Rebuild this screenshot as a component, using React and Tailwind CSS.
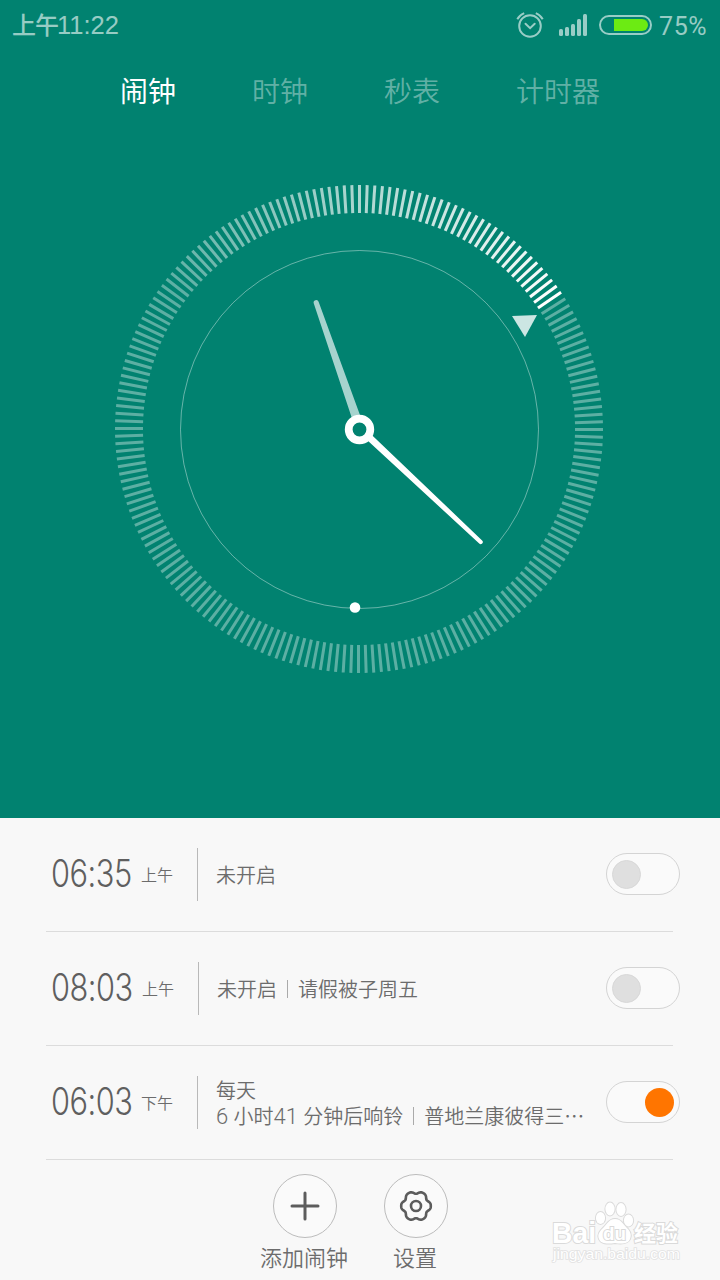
import { useState } from "react";
import clsx from "clsx";

const tabs = ["闹钟", "时钟", "秒表", "计时器"];

const initialAlarms = [
  { id: 1, time: "06:35", period: "上午", status: "未开启", on: false },
  { id: 2, time: "08:03", period: "上午", status: "未开启", label: "请假被子周五", on: false },
  {
    id: 3,
    time: "06:03",
    period: "下午",
    repeat: "每天",
    status: "6 小时41 分钟后响铃",
    label: "普地兰康彼得三⋯",
    on: true,
  },
];

const TICKS = 200;
const ACTIVE = 31;

// ticks fade out counter-clockwise from the active one
const tickOpacity = (i) => {
  const behind = (ACTIVE - i + TICKS) % TICKS;
  return Math.max(0.36, 1 - behind * 0.0105);
};

// outline of the six-lobed settings gear
const gearPoints = Array.from({ length: 120 }, (_, i) => {
  const a = (i * Math.PI) / 60;
  const r = 14.8 - 2.6 * ((1 - Math.cos(6 * a)) / 2) ** 1.7;
  return `${(17 + r * Math.cos(a)).toFixed(2)},${(17 + r * Math.sin(a)).toFixed(2)}`;
}).join(" ");

const StatusBar = () => (
  <div className="flex h-[50px] items-center justify-between pl-3 pr-3 text-white/60">
    <span className="flex items-center leading-[48px]">
      <span className="pb-[2px] text-[24px] font-medium tracking-[-1px]">上午</span>
      <span className="-ml-px font-['Liberation_Sans'] text-[25.5px]">11:22</span>
    </span>
    <div className="flex items-center">
      <svg width="28" height="28" viewBox="0 0 28 28" fill="none" stroke="currentColor" strokeWidth="2">
        <circle cx="14" cy="15" r="10.8" />
        <path d="M9.5 12.8l4.6 4.4 4.6-4.4" strokeLinecap="round" />
        <path d="M1.3 8.2Q3.4 4.2 8.2 2.2M26.7 8.2Q24.6 4.2 19.8 2.2" />
      </svg>
      <svg className="ml-[14px]" width="30" height="24" viewBox="0 0 30 24" fill="currentColor">
        <rect x="1" y="16" width="4" height="7" rx="1.5" />
        <rect x="7" y="14" width="4" height="9" rx="1.5" />
        <rect x="13" y="11" width="4" height="12" rx="1.5" />
        <rect x="19" y="6" width="4" height="17" rx="1.5" />
        <rect x="25" y="1" width="4" height="22" rx="1.5" />
      </svg>
      <div className="ml-[11px] flex h-[20px] w-[53px] justify-end rounded-full border-2 border-white/60 p-[2px]">
        <div className="h-[12px] w-[34px] rounded-r-full bg-[#6ceb13]" />
      </div>
      <span className="ml-[7px] w-[49px] pt-[3px] whitespace-nowrap font-['Roboto'] text-[25px] tracking-[0.6px]">
        75%
      </span>
    </div>
  </div>
);

const Dial = () => (
  <svg width="490" height="490" viewBox="114 184 490 490" fill="none">
    {Array.from({ length: TICKS }, (_, i) => (
      <rect
        key={i}
        x="358"
        y="185"
        width="3"
        height="28"
        fill="#fff"
        fillOpacity={tickOpacity(i)}
        transform={`rotate(${(i * 360) / TICKS} 359 429)`}
      />
    ))}
    <circle cx="359.5" cy="429.5" r="179" stroke="#fff" strokeOpacity="0.4" />
    <path d="M512 316l25-1-12 22z" fill="#cce6e3" />
    {/* hour hand */}
    <path d="M313.8 303.4a2.5 2.5 0 0 1 4.8-1.7L361.8 420l-8.3 3z" fill="#a6d3ce" />
    {/* minute hand */}
    <path d="M367 440l112.2 103.5a2.1 2.1 0 0 0 2.9-3.1L371.8 435z" fill="#fff" />
    <circle cx="359.5" cy="429.5" r="10.8" stroke="#fff" strokeWidth="7.8" />
    <circle cx="355" cy="607.5" r="5.3" fill="#fff" />
  </svg>
);

const Toggle = ({ on, onClick }) => (
  <button
    onClick={onClick}
    className={clsx(
      "flex h-[42px] w-[74px] shrink-0 cursor-pointer items-center rounded-full border border-[#d4d4d4] bg-[#fafafa] px-[5px]",
      on && "justify-end"
    )}
  >
    <span className={clsx("size-[29px] rounded-full", on ? "bg-[#ff7500]" : "border border-[#d8d8d8] bg-[#dfdfdf]")} />
  </button>
);

const AlarmRow = ({ alarm, onToggle }) => (
  <div className="relative flex h-[114px] items-center pr-10 pb-[2px] pl-[51px] after:absolute after:bottom-0 after:left-[46px] after:h-px after:w-[627px] after:bg-[#dcdcdc]">
    <div className={clsx("flex items-center", alarm.id === 2 ? "w-[147px]" : "w-[146px]")}>
      <span className={clsx("pb-[2px] text-[#5f5f5f]", alarm.id === 2 ? "w-[91px]" : "w-[90px]")}>
        <span className="inline-block origin-left scale-x-[0.81] font-['Inter'] text-[38px] leading-[60px] font-[350] tracking-[-0.6px]">
          {alarm.time}
        </span>
      </span>
      <span className="text-[16px] font-[350] text-[#6c6c6c]">{alarm.period}</span>
    </div>
    <div className="h-[53px] w-px bg-[#b9b9b9]" />
    <div className="ml-[18px] flex-1 pt-[2px] text-[20px] leading-[26px] font-[350] text-[#6c6c6c]">
      {alarm.repeat && <p>{alarm.repeat}</p>}
      <div className="flex h-[26px] items-center whitespace-nowrap">
        <span>
          {alarm.status.split(/([\d ]+)/).map((part, i) =>
            /\d/.test(part) ? (
              <span key={i} className="font-['Roboto'] text-[22px] font-[350]">{part}</span>
            ) : (
              part
            )
          )}
        </span>
        {alarm.label && (
          <>
            <span className="mx-[10px] h-[18px] w-px bg-[#aaa]" />
            <span>{alarm.label}</span>
          </>
        )}
      </div>
    </div>
    <Toggle on={alarm.on} onClick={() => onToggle(alarm.id)} />
  </div>
);

const ActionButton = ({ label, children }) => (
  <button className="flex w-[111px] cursor-pointer flex-col items-center text-[#5c5c5c]">
    <span className="flex size-16 items-center justify-center rounded-full border-[1.5px] border-[#bcbcbc] bg-[#fafafa]">
      {children}
    </span>
    <span className="mt-[2px] -ml-px text-[22px] leading-[32px] font-[350] text-[#6c6c6c]">{label}</span>
  </button>
);

const Watermark = () => (
  <svg
    className="pointer-events-none absolute bottom-[12px] left-[548px]"
    width="136"
    height="68"
    viewBox="548 1200 136 68"
    fill="#fff"
    stroke="#dadada"
    strokeWidth="2"
    paintOrder="stroke"
    fontFamily="'Liberation Sans', sans-serif"
    fontWeight="700"
  >
    <text x="552" y="1243" fontSize="29" textLength="44" lengthAdjust="spacingAndGlyphs">Bai</text>
    <ellipse cx="600.5" cy="1218" rx="4.6" ry="6" />
    <ellipse cx="610" cy="1209" rx="4.6" ry="6.4" />
    <ellipse cx="621" cy="1209.5" rx="4.6" ry="6.4" />
    <ellipse cx="628.5" cy="1220.5" rx="4.6" ry="6" />
    <path d="M615 1219c6 0 8 5 11 8 4 4 6 7 4 12-2 5-8 5-15 4-8 1-14 1-16-4-2-5 1-8 5-12 3-3 5-8 11-8z" />
    <text x="603" y="1240" fontSize="19" textLength="23" lengthAdjust="spacingAndGlyphs">du</text>
    <text x="634" y="1241" fontSize="22" fontFamily="'Noto Sans CJK SC', sans-serif">经验</text>
    <text x="553" y="1259" fontSize="14.5" fontWeight="400" strokeWidth="1.6" stroke="#e2e2e2" textLength="127" lengthAdjust="spacingAndGlyphs">
      jingyan.baidu.com
    </text>
  </svg>
);

const App = () => {
  const [activeTab, setActiveTab] = useState("闹钟");
  const [alarms, setAlarms] = useState(initialAlarms);

  const toggleAlarm = (id) => {
    setAlarms((prev) => prev.map((a) => (a.id === id ? { ...a, on: !a.on } : a)));
  };

  return (
    <div className="relative h-[1280px] w-[720px] overflow-hidden bg-[#f8f8f8] font-['Noto_Sans_CJK_SC',sans-serif]">
      <div className="h-[818px] bg-[#018270]">
        <StatusBar />
        <div className="flex h-[82px] items-center justify-center gap-[76px] pb-[2px]">
          {tabs.map((tab) => (
            <button
              key={tab}
              onClick={() => setActiveTab(tab)}
              className={clsx(
                "cursor-pointer text-[28px] leading-[40px]",
                activeTab === tab ? "text-white" : "font-[350] text-white/40"
              )}
            >
              {tab}
            </button>
          ))}
        </div>
        <div className="mt-[52px] pl-[114px]">
          <Dial />
        </div>
      </div>

      {/* Alarm list */}
      <div>
        {alarms.map((alarm) => (
          <AlarmRow key={alarm.id} alarm={alarm} onToggle={toggleAlarm} />
        ))}
      </div>

      {/* Bottom actions */}
      <div className="flex justify-center pt-[14px]">
        <ActionButton label="添加闹钟">
          <svg width="30" height="30" viewBox="0 0 30 30" stroke="currentColor" strokeWidth="3" strokeLinecap="round">
            <path d="M15 2v26M2 15h26" />
          </svg>
        </ActionButton>
        <ActionButton label="设置">
          <svg width="34" height="34" viewBox="0 0 34 34" fill="none" stroke="currentColor" strokeWidth="2.6" strokeLinejoin="round">
            <circle cx="17" cy="17" r="5" />
            <polygon points={gearPoints} />
          </svg>
        </ActionButton>
      </div>

      <Watermark />
    </div>
  );
};

export default App;
